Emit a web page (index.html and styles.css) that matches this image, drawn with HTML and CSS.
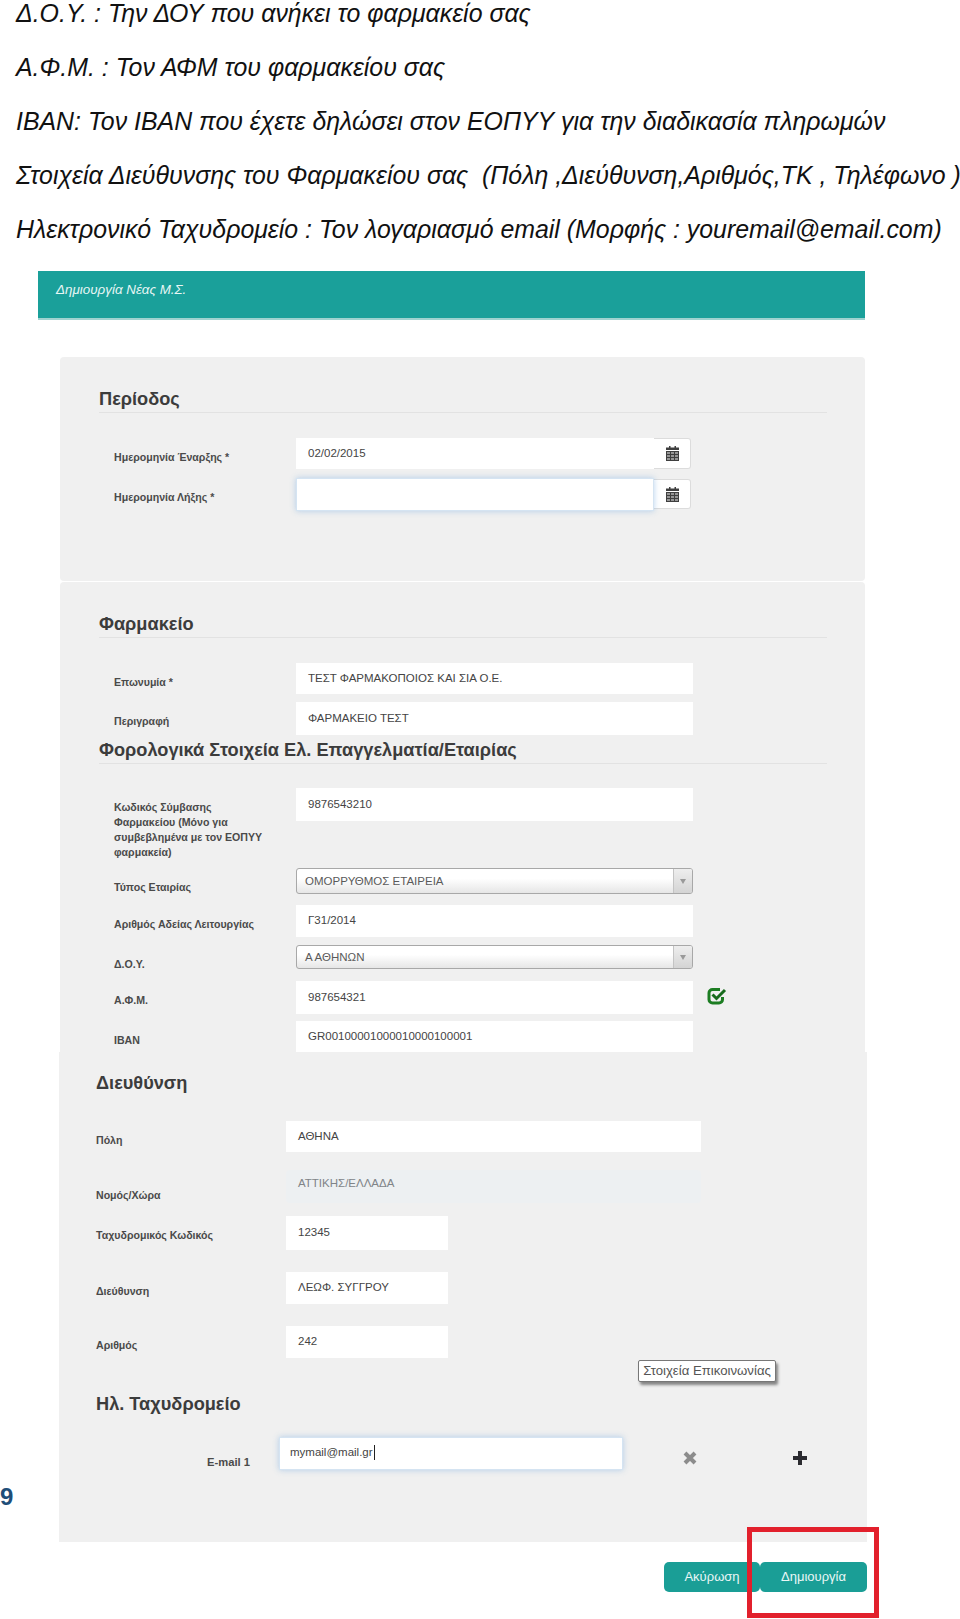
FILE: index.html
```html
<!DOCTYPE html>
<html lang="el">
<head>
<meta charset="utf-8">
<title>Δημιουργία Νέας Μ.Σ.</title>
<link rel="stylesheet" href="styles.css">
</head>
<body>
<div class="doc">
  <div class="intro">
    <p>Δ.Ο.Υ. : Την ΔΟΥ που ανήκει το φαρμακείο σας</p>
    <p>Α.Φ.Μ. : Τον ΑΦΜ του φαρμακείου σας</p>
    <p>IBAN: Τον IBAN που έχετε δηλώσει στον ΕΟΠΥΥ για την διαδικασία πληρωμών</p>
    <p>Στοιχεία Διεύθυνσης του Φαρμακείου σας&nbsp; (Πόλη ,Διεύθυνση,Αριθμός,ΤΚ , Τηλέφωνο )</p>
    <p>Ηλεκτρονικό Ταχυδρομείο : Τον λογαριασμό email (Μορφής : youremail@email.com)</p>
  </div>

  <div class="titlebar">Δημιουργία Νέας Μ.Σ.</div>

  <section class="panel panel-period">
    <h2 class="heading ruled">Περίοδος</h2>
    <div class="row mt-25">
      <div class="label">Ημερομηνία Έναρξης *</div>
      <div class="field w-date h-31">02/02/2015</div>
      <div class="addon">
        <svg class="cal" viewBox="0 0 13 15" aria-hidden="true"><path d="M3 0h1.500v2H3zM8.500 0H10v2H8.500z"/><path d="M0 1.500h13V4H0z"/><path d="M0 5h13v10H0z" opacity=".55"/><path d="M0 5h13v1H0zM0 8h13v1H0zM0 11h13v1H0zM0 14h13v1H0zM0 5h1v10H0zM4 5h1v10H4zM8 5h1v10H8zM12 5h1v10h-1z"/></svg>
      </div>
    </div>
    <div class="row mt-9">
      <div class="label">Ημερομηνία Λήξης *</div>
      <div class="field w-date h-33 focus"></div>
      <div class="addon addon-low">
        <svg class="cal" viewBox="0 0 13 15" aria-hidden="true"><path d="M3 0h1.500v2H3zM8.500 0H10v2H8.500z"/><path d="M0 1.500h13V4H0z"/><path d="M0 5h13v10H0z" opacity=".55"/><path d="M0 5h13v1H0zM0 8h13v1H0zM0 11h13v1H0zM0 14h13v1H0zM0 5h1v10H0zM4 5h1v10H4zM8 5h1v10H8zM12 5h1v10h-1z"/></svg>
      </div>
    </div>
  </section>

  <section class="panel panel-pharmacy">
    <h2 class="heading ruled">Φαρμακείο</h2>
    <div class="row mt-25">
      <div class="label">Επωνυμία *</div>
      <div class="field w-full h-31">ΤΕΣΤ ΦΑΡΜΑΚΟΠΟΙΟΣ ΚΑΙ ΣΙΑ Ο.Ε.</div>
    </div>
    <div class="row mt-8">
      <div class="label">Περιγραφή</div>
      <div class="field w-full h-33">ΦΑΡΜΑΚΕΙΟ ΤΕΣΤ</div>
    </div>
    <h2 class="heading ruled mt-4">Φορολογικά Στοιχεία Ελ. Επαγγελματία/Εταιρίας</h2>
    <div class="row mt-24">
      <div class="label">Κωδικός Σύμβασης<br>Φαρμακείου (Μόνο για<br>συμβεβλημένα με τον ΕΟΠΥΥ<br>φαρμακεία)</div>
      <div class="field w-full h-33">9876543210</div>
    </div>
    <div class="row mt-8">
      <div class="label">Τύπος Εταιρίας</div>
      <div class="select h-26"><span class="select-text">ΟΜΟΡΡΥΘΜΟΣ ΕΤΑΙΡΕΙΑ</span><span class="select-btn"><i class="arrow"></i></span></div>
    </div>
    <div class="row mt-10">
      <div class="label">Αριθμός Αδείας Λειτουργίας</div>
      <div class="field w-full h-32">Γ31/2014</div>
    </div>
    <div class="row mt-8">
      <div class="label">Δ.Ο.Υ.</div>
      <div class="select h-24"><span class="select-text">Α ΑΘΗΝΩΝ</span><span class="select-btn"><i class="arrow"></i></span></div>
    </div>
    <div class="row mt-9">
      <div class="label">Α.Φ.Μ.</div>
      <div class="field w-full h-33">987654321</div>
      <svg class="check" viewBox="0 0 20 18" aria-hidden="true"><path d="M13 2.500H5.500A3.500 3.500 0 0 0 2 6v6.500A3.500 3.500 0 0 0 5.500 16H12a3.500 3.500 0 0 0 3.500-3.500V10" fill="none" stroke="#1c7d22" stroke-width="3"/><path d="M5.500 7.500l4 4L18 3" fill="none" stroke="#176b1c" stroke-width="3"/></svg>
    </div>
    <div class="row mt-7">
      <div class="label">IBAN</div>
      <div class="field w-full h-31">GR00100001000010000100001</div>
    </div>
  </section>

  <section class="panel panel-address">
    <h2 class="heading">Διευθύνση</h2>
    <div class="row row-address mt-25">
      <div class="label">Πόλη</div>
      <div class="field w-wide h-31">ΑΘΗΝΑ</div>
    </div>
    <div class="row row-address mt-18">
      <div class="label label-low">Νομός/Χώρα</div>
      <div class="field w-wide h-33 disabled">ΑΤΤΙΚΗΣ/ΕΛΛΑΔΑ</div>
    </div>
    <div class="row row-address mt-13">
      <div class="label">Ταχυδρομικός Κωδικός</div>
      <div class="field w-short h-34">12345</div>
    </div>
    <div class="row row-address mt-22">
      <div class="label">Διεύθυνση</div>
      <div class="field w-short h-32">ΛΕΩΦ. ΣΥΓΓΡΟΥ</div>
    </div>
    <div class="row row-address mt-22">
      <div class="label">Αριθμός</div>
      <div class="field w-short h-32">242</div>
    </div>
    <h2 class="heading mt-35">Ηλ. Ταχυδρομείο</h2>
    <div class="row row-email mt-20">
      <div class="label label-low label-right">E-mail 1</div>
      <div class="field w-email h-33 focus"><span class="caret">mymail@mail.gr</span></div>
      <svg class="glyph glyph-x" viewBox="0 0 14 14" aria-hidden="true"><path d="M2 2l10 10M12 2L2 12" stroke="#8c8c8c" stroke-width="4" fill="none"/></svg>
      <svg class="glyph glyph-plus" viewBox="0 0 14 14" aria-hidden="true"><path d="M7 0v14M0 7h14" stroke="#2b2b30" stroke-width="4" fill="none"/></svg>
    </div>
    <div class="tooltip">Στοιχεία Επικοινωνίας</div>
  </section>

  <div class="actions">
    <div class="btn btn-cancel">Ακύρωση</div>
    <div class="btn btn-create">Δημιουργία</div>
  </div>

  <div class="pagenum">9</div>
  <div class="callout"></div>
</div>
</body>
</html>
```
FILE: styles.css
```css
* { box-sizing: border-box; }
html, body { margin: 0; padding: 0; background: #fff; }
body { font-family: "Liberation Sans", Arial, sans-serif; color: #111; }
.doc { position: relative; width: 960px; height: 1619px; overflow: hidden; }

.intro { height: 271px; padding-left: 16px; }
.intro p { margin: 0 0 28.1px; font-size: 24.9px; line-height: 26px; font-style: italic; white-space: nowrap; color: #111; }

.titlebar {
  width: 827px; height: 49px; margin-left: 38px; padding: 10px 0 0 18px;
  background: #1aa09a; border-bottom: 2px solid #9fd3d0;
  color: #e8f6f5; font-size: 13.4px; line-height: 18px; font-style: italic;
}

.panel { background: #f0f0f0; }
.panel-period { width: 805px; height: 224px; margin: 37px 0 0 60px; padding: 31px 38px 0 39px; border-radius: 4px; }
.panel-pharmacy { width: 805px; height: 470px; margin: 1px 0 0 60px; padding: 31px 38px 0 39px; border-radius: 4px 4px 0 0; }
.panel-address { position: relative; width: 808px; height: 490px; margin-left: 59px; padding: 20px 0 0 37px; }

.heading { margin: 0; padding-bottom: 2px; font-size: 18.2px; line-height: 22px; font-weight: bold; color: #3c3c3c; white-space: nowrap; }
.ruled { border-bottom: 1px solid #e2e2e2; }

.row { display: flex; align-items: flex-start; }
.label { flex: 0 0 197px; padding: 12px 20px 0 15px; font-size: 10.6px; line-height: 15px; font-weight: bold; color: #4a4a4a; white-space: nowrap; }
.row-address .label { flex-basis: 190px; padding-left: 0; }
.row-email .label { flex-basis: 183px; padding: 18px 29px 0 0; font-size: 11.2px; }
.row-address .label-low { padding-top: 18px; }
.label-right { text-align: right; }

.field { display: flex; align-items: center; padding: 0 12px 2px; background: #fff; font-size: 11.5px; color: #444; white-space: nowrap; }
.w-full { width: 397px; }
.w-date { width: 358px; }
.w-wide { width: 415px; }
.w-short { width: 162px; }
.w-email { width: 344px; padding-left: 10px; }
.h-24 { height: 24px; } .h-26 { height: 26px; } .h-31 { height: 31px; } .h-32 { height: 32px; } .h-33 { height: 33px; } .h-34 { height: 34px; }
.focus { position: relative; box-shadow: 0 0 6px rgba(102, 160, 220, .45); border: 1px solid #d5e4f2; }
.disabled { background: #edf0f2; color: #808488; border-radius: 4px; padding-bottom: 7px; }
.caret { padding-right: 1px; border-right: 1px solid #222; line-height: 15px; }

.addon { display: flex; align-items: center; justify-content: center; width: 37px; height: 31px; background: #fff; border: 1px solid #dcdcdc; border-left: 0; border-radius: 0 3px 3px 0; }
.addon-low { height: 30px; margin-top: 1px; }
.cal { width: 13px; height: 15px; fill: #3f3f3f; }

.select { display: flex; width: 397px; border: 1px solid #a8a8a8; border-radius: 3px; background: linear-gradient(#fff 40%, #e6e6e6); }
.select-text { flex: 1; padding-left: 8px; font-size: 11.5px; color: #5a5a5a; align-self: center; white-space: nowrap; }
.select-btn { display: flex; align-items: center; justify-content: center; width: 19px; border-left: 1px solid #c4c4c4; background: linear-gradient(#eee, #d4d4d4); border-radius: 0 2px 2px 0; }
.arrow { width: 0; height: 0; border-left: 3px solid transparent; border-right: 3px solid transparent; border-top: 5px solid #999; }

.check { flex: none; width: 20px; height: 18px; margin: 6px 0 0 14px; }
.glyph { flex: none; width: 14px; height: 14px; margin-top: 14px; }
.glyph-x { margin-left: 60px; }
.glyph-plus { margin-left: 96px; }

.mt-4 { margin-top: 4px; } .mt-7 { margin-top: 7px; } .mt-8 { margin-top: 8px; } .mt-9 { margin-top: 9px; } .mt-10 { margin-top: 10px; }
.mt-13 { margin-top: 13px; } .mt-18 { margin-top: 18px; } .mt-20 { margin-top: 20px; } .mt-22 { margin-top: 22px; } .mt-24 { margin-top: 24px; } .mt-25 { margin-top: 25px; } .mt-35 { margin-top: 35px; }

.tooltip {
  position: absolute; left: 579px; top: 308px; width: 138px; height: 22px;
  border: 1px solid #777; border-radius: 2px; background: #fff;
  box-shadow: 2px 3px 3px rgba(0, 0, 0, .45);
  font-size: 13.2px; line-height: 20px; text-align: center; color: #555; white-space: nowrap;
}

.actions { display: flex; justify-content: flex-end; padding: 20px 93px 0 0; }
.btn { height: 30px; border-radius: 5px; background: #1a9e96; color: #eaf7f6; font-size: 13px; line-height: 30px; text-align: center; }
.btn-cancel { width: 96px; }
.btn-create { width: 107px; }

.pagenum { position: absolute; left: 0; top: 1483px; font-size: 24px; line-height: 28px; font-weight: bold; color: #1f4e79; }
.callout { position: absolute; left: 747px; top: 1527px; width: 132px; height: 91px; border: 5px solid #e2202c; }
```
